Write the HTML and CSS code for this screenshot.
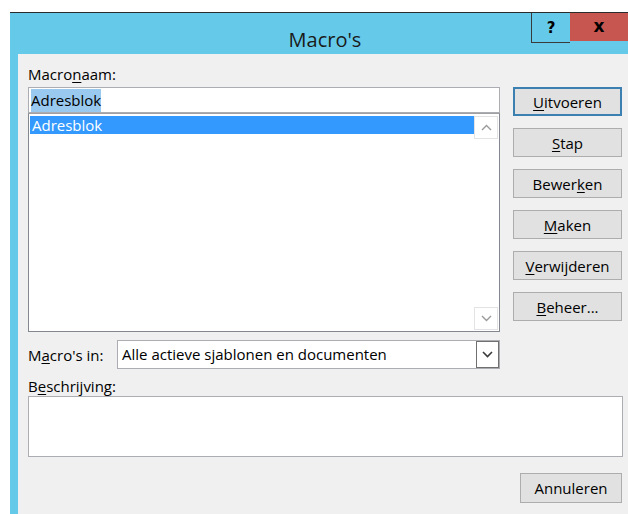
FILE: index.html
```html
<!DOCTYPE html>
<html lang="nl">
<head>
<meta charset="utf-8">
<title>Macro's</title>
<link rel="stylesheet" href="styles.css">
</head>
<body>
<div class="window">
  <div class="titlebar">
    <span class="title">Macro's</span>
    <div class="caption-buttons">
      <span class="cap-help">?</span>
      <span class="cap-close">x</span>
    </div>
  </div>
  <div class="client">
    <div class="main">
      <div class="left">
        <div class="label">Macro<u>n</u>aam:</div>
        <div class="name-input"><span class="text-sel">Adresblok</span></div>
        <div class="listbox">
          <div class="items">
            <div class="item selected">Adresblok</div>
          </div>
          <div class="vscroll">
            <span class="arrow">
              <svg width="11" height="7" viewBox="0 0 11 7"><path d="M1 6 L5.5 1.5 L10 6" fill="none" stroke="#9a9a9a" stroke-width="1.4"/></svg>
            </span>
            <span class="arrow">
              <svg width="11" height="7" viewBox="0 0 11 7"><path d="M1 1 L5.5 5.5 L10 1" fill="none" stroke="#9a9a9a" stroke-width="1.4"/></svg>
            </span>
          </div>
        </div>
        <div class="scope-row">
          <span class="label">M<u>a</u>cro's in:</span>
          <div class="combo">
            <span class="combo-text">Alle actieve sjablonen en documenten</span>
            <span class="combo-drop">
              <svg width="11" height="7" viewBox="0 0 11 7"><path d="M1 1 L5.5 5.5 L10 1" fill="none" stroke="#3a3a3a" stroke-width="1.6"/></svg>
            </span>
          </div>
        </div>
      </div>
      <div class="actions">
        <button class="btn default"><u>U</u>itvoeren</button>
        <button class="btn"><u>S</u>tap</button>
        <button class="btn">Bewer<u>k</u>en</button>
        <button class="btn"><u>M</u>aken</button>
        <button class="btn"><u>V</u>erwijderen</button>
        <button class="btn"><u>B</u>eheer...</button>
      </div>
    </div>
    <div class="label desc-label">B<u>e</u>schrijving:</div>
    <div class="description"></div>
    <div class="footer">
      <button class="btn cancel">Annuleren</button>
    </div>
  </div>
</div>
</body>
</html>
```

FILE: styles.css
```css
html, body {
  margin: 0;
  padding: 0;
  background: #ffffff;
  overflow: hidden;
  width: 628px;
  height: 514px;
}

body {
  font-family: "Open Sans", "Noto Sans", sans-serif;
  font-size: 15px;
  color: #000;
}

u {
  text-decoration-thickness: 1px;
  text-underline-offset: 2px;
}

.window {
  margin: 12px 0 0 10px;
  width: 630px;
  height: 520px;
  background: #65cae9;
  border-top: 1px solid #2b2b2b;
  display: flex;
  flex-direction: column;
}

/* caption bar */
.titlebar {
  height: 41px;
  display: grid;
  grid-template-columns: 1fr auto 1fr;
  align-items: start;
}

.title {
  grid-column: 2;
  font-size: 20px;
  line-height: 20px;
  padding-top: 17px;
  color: #1a1a1a;
}

.caption-buttons {
  grid-column: 3;
  justify-self: end;
  display: flex;
  padding-right: 12px;
}

.cap-help {
  width: 38px;
  height: 29px;
  border-left: 1px solid #3a3a3a;
  border-bottom: 1px solid #3a3a3a;
  display: flex;
  align-items: center;
  justify-content: center;
  font-family: "DejaVu Sans", sans-serif;
  font-weight: bold;
  font-size: 15px;
  color: #000;
}

.cap-close {
  width: 58px;
  height: 28px;
  background: #c75650;
  display: flex;
  align-items: center;
  justify-content: center;
  font-family: "DejaVu Sans", sans-serif;
  font-weight: bold;
  font-size: 17px;
  color: #000;
  padding-bottom: 2px;
  box-sizing: border-box;
}

/* dialog body */
.client {
  flex: 1;
  margin-left: 8px;
  background: #f0f0f0;
  padding: 10px 0 0 10px;
}

.label {
  line-height: 20px;
  height: 20px;
}

.main {
  display: flex;
  gap: 13px;
}

.left {
  width: 472px;
}

.name-input {
  margin-top: 3px;
  height: 26px;
  box-sizing: border-box;
  border: 1px solid #abadb3;
  background: #fff;
  padding: 3px 0 0 2px;
  line-height: 18px;
}

.text-sel {
  background: #99c9ef;
  padding: 1px 0 2px;
}

.listbox {
  height: 219px;
  box-sizing: border-box;
  border: 1px solid #828790;
  border-top-color: #a0a0a0;
  background: #fff;
  display: flex;
  padding: 2px 1px 1px 1px;
}

.items {
  flex: 1;
}

.item {
  height: 18px;
  line-height: 18px;
  padding-left: 2px;
}

.item.selected {
  background: #3399ff;
  color: #fff;
}

.vscroll {
  width: 24px;
  display: flex;
  flex-direction: column;
  justify-content: space-between;
}

.arrow {
  height: 23px;
  box-sizing: border-box;
  border: 1px solid #e3e3e3;
  display: flex;
  align-items: center;
  justify-content: center;
}

.scope-row {
  margin-top: 8px;
  display: flex;
  align-items: center;
}

.scope-row .label {
  width: 89px;
}

.combo {
  flex: 1;
  height: 29px;
  box-sizing: border-box;
  border: 1px solid #abadb3;
  background: #fff;
  display: flex;
  align-items: stretch;
}

.combo-text {
  flex: 1;
  padding-left: 4px;
  line-height: 26px;
}

.combo-drop {
  width: 23px;
  box-sizing: border-box;
  border: 1px solid #707070;
  display: flex;
  align-items: center;
  justify-content: center;
  background: #fff;
}

.actions {
  padding-top: 23px;
  display: flex;
  flex-direction: column;
  gap: 12px;
  width: 109px;
}

.btn {
  font: inherit;
  color: #000;
  height: 29px;
  box-sizing: border-box;
  border: 1px solid #adadad;
  background: #e1e1e1;
  padding: 0;
  line-height: 26px;
  text-align: center;
}

.btn.default {
  border: 2px solid #3c7fb1;
  line-height: 24px;
}

.desc-label {
  margin-top: 7px;
}

.description {
  width: 595px;
  height: 61px;
  box-sizing: border-box;
  border: 1px solid #abadb3;
  background: #fff;
}

.footer {
  width: 594px;
  display: flex;
  justify-content: flex-end;
  margin-top: 16px;
}

.btn.cancel {
  width: 102px;
  height: 30px;
}
```
